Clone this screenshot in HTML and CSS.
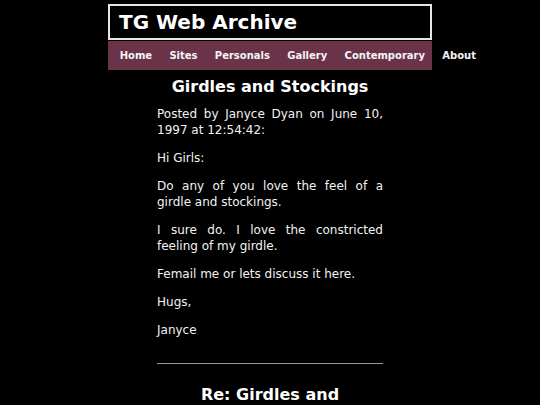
FILE: index.html
```html
<!DOCTYPE html>
<html>
<head>
<meta charset="utf-8">
<title>TG Web Archive</title>
<link rel="stylesheet" href="styles.css">
</head>
<body>
<div class="header">
  <div class="site-title">TG Web Archive</div>
</div>
<nav class="nav">
  <a class="nav-item" href="#">Home</a>
  <a class="nav-item" href="#">Sites</a>
  <a class="nav-item" href="#">Personals</a>
  <a class="nav-item" href="#">Gallery</a>
  <a class="nav-item" href="#">Contemporary</a>
  <a class="nav-item" href="#">About</a>
</nav>
<div class="content">
  <h2 class="post-title">Girdles and Stockings</h2>
  <p class="post-text">Posted by Janyce Dyan on June 10, 1997 at 12:54:42:</p>
  <p class="post-text">Hi Girls:</p>
  <p class="post-text">Do any of you love the feel of a girdle and stockings.</p>
  <p class="post-text">I sure do. I love the constricted feeling of my girdle.</p>
  <p class="post-text">Femail me or lets discuss it here.</p>
  <p class="post-text">Hugs,</p>
  <p class="post-text">Janyce</p>
  <hr class="divider">
  <h2 class="post-title reply">Re: Girdles and Stockings</h2>
</div>
</body>
</html>
```
FILE: styles.css
```css
html, body {
  margin: 0;
  padding: 0;
  background: #000;
  color: #f2f2f2;
  font-family: "DejaVu Sans", Verdana, sans-serif;
}

.header {
  margin: 4px auto 0;
  border: 2px solid #e6e6e6;
  padding: 5px 0 4px 9px;
  box-sizing: content-box;
  width: 311px;
}

.site-title {
  font-size: 20px;
  font-weight: bold;
  line-height: 23px;
  color: #fff;
}

.nav {
  display: flex;
  flex-wrap: nowrap;
  width: 321px;
  margin: 1px auto 0;
  padding-left: 3px;
  background: #6a3349;
  height: 29px;
}

.nav-item {
  flex-shrink: 0;
  white-space: nowrap;
  padding: 0 8.65px;
  font-size: 10px;
  font-weight: bold;
  line-height: 29px;
  color: #f4f4f4;
  text-decoration: none;
}

.content {
  width: 226px;
  margin: 0 auto;
}

.post-title {
  font-size: 16px;
  font-weight: bold;
  text-align: center;
  margin: 7px 0 10px;
  color: #fff;
}

.post-text {
  font-size: 12px;
  line-height: 16px;
  margin: 0 0 12px;
  text-align: justify;
}

.divider {
  border: 0;
  border-top: 1px solid #9a9a9a;
  margin: 25px 0 0;
  height: 0;
}

.reply {
  margin-top: 21px;
}
```
